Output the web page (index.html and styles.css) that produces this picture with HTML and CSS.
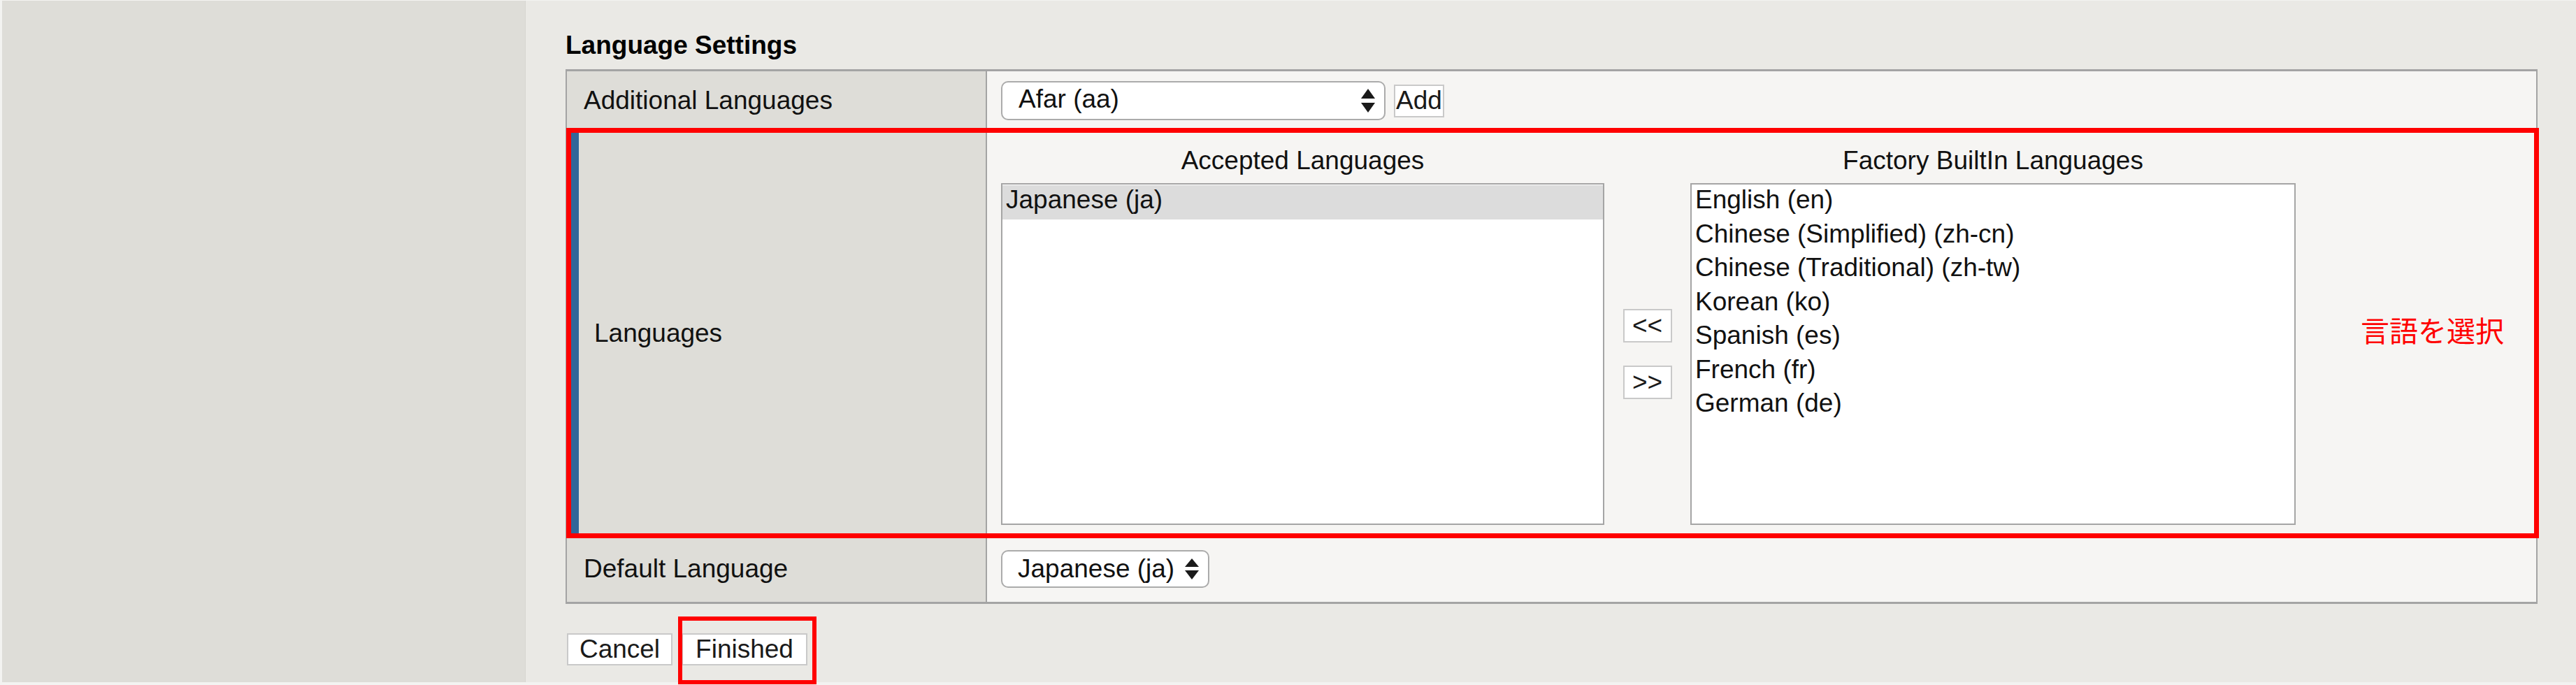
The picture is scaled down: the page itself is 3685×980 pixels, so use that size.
FILE: index.html
```html
<!DOCTYPE html>
<html lang="en">
<head>
<meta charset="utf-8">
<title>Language Settings</title>
<link rel="stylesheet" href="styles.css">
</head>
<body>
<div class="page">
  <aside class="sidebar"></aside>
  <main class="content">
    <h2 class="title">Language Settings</h2>
    <div class="settings">
      <div class="row row-add">
        <div class="label">Additional Languages</div>
        <div class="value">
          <div class="select select-wide">
            <span>Afar (aa)</span>
            <svg class="arrows" width="20" height="34" viewBox="0 0 20 34"><polygon points="10,0 20,14 0,14"/><polygon points="0,20 20,20 10,34"/></svg>
          </div>
          <button class="btn btn-add">Add</button>
        </div>
      </div>
      <div class="row row-langs">
        <div class="label label-marked">Languages</div>
        <div class="value langs">
          <div class="list-head">Accepted Languages</div>
          <div class="list-head list-head-factory">Factory BuiltIn Languages</div>
          <ul class="listbox list-accepted">
            <li class="selected">Japanese (ja)</li>
          </ul>
          <div class="movers">
            <button class="btn btn-move">&lt;&lt;</button>
            <button class="btn btn-move">&gt;&gt;</button>
          </div>
          <ul class="listbox list-factory">
            <li>English (en)</li>
            <li>Chinese (Simplified) (zh-cn)</li>
            <li>Chinese (Traditional) (zh-tw)</li>
            <li>Korean (ko)</li>
            <li>Spanish (es)</li>
            <li>French (fr)</li>
            <li>German (de)</li>
          </ul>
          <div class="note">言語を選択</div>
        </div>
      </div>
      <div class="row row-default">
        <div class="label">Default Language</div>
        <div class="value">
          <div class="select select-fit">
            <span>Japanese (ja)</span>
            <svg class="arrows" width="20" height="30" viewBox="0 0 20 30"><polygon points="10,0 20,12 0,12"/><polygon points="0,17 20,17 10,30"/></svg>
          </div>
        </div>
      </div>
    </div>
    <div class="actions">
      <button class="btn btn-cancel">Cancel</button>
      <span class="marked"><button class="btn btn-finish">Finished</button></span>
    </div>
  </main>
</div>
</body>
</html>
```
FILE: styles.css
```css
* {
  box-sizing: border-box;
}

html,
body {
  margin: 0;
  padding: 0;
}

body {
  width: 3685px;
  height: 980px;
  overflow: hidden;
  background: #f3f3f1;
  font-family: "Liberation Sans", Arial, Helvetica, sans-serif;
  color: #111;
}

.page {
  display: flex;
  height: 975px;
  margin-top: 1px;
  padding-left: 3px;
}

.sidebar {
  flex: none;
  width: 749px;
  background: #deddd8;
  border-right: 1px solid #d7d6d1;
}

.content {
  flex: 1;
  background: #eae9e5;
  padding: 43px 55px 0 57px;
}

.title {
  margin: 0 0 13px;
  font-size: 37px;
  line-height: 42px;
  font-weight: bold;
  color: #000;
}

.settings {
  border: 2px solid #a4a4a4;
  border-top-width: 3px;
  border-bottom-width: 3px;
}

.row {
  display: flex;
}

.row + .row {
  border-top: 2px solid #a4a4a4;
}

.row-add {
  height: 84px;
}

.row-default {
  height: 96px;
}

.row-langs {
  position: relative;
}

.row-langs::after {
  content: "";
  position: absolute;
  top: -5px;
  left: -1px;
  right: -4px;
  bottom: -5px;
  border: 7px solid #ff0000;
  pointer-events: none;
}

.label {
  flex: none;
  width: 601px;
  display: flex;
  align-items: center;
  padding-left: 24px;
  background: #deddd8;
  border-right: 2px solid #a4a4a4;
  font-size: 37px;
  line-height: 42px;
}

.label-marked {
  border-left: 17px solid #336699;
  padding-left: 22px;
}

.value {
  flex: 1;
  display: flex;
  align-items: center;
  padding-left: 20px;
  background: #f6f5f3;
  font-size: 37px;
  line-height: 42px;
}

.select {
  display: flex;
  align-items: center;
  background: #fff;
  border: 2px solid #ababab;
  border-radius: 10px;
  font-size: 37px;
  line-height: 42px;
  color: #111;
}

.select-wide {
  width: 550px;
  height: 56px;
  justify-content: space-between;
  padding: 0 13px 4px 23px;
}

.select-fit {
  height: 54px;
  gap: 15px;
  padding: 0 13px 0 22px;
}

.arrows {
  flex: none;
  fill: #1a1a1a;
}

.select-wide .arrows {
  margin-top: 4px;
}

.btn {
  margin: 0;
  padding: 0;
  background: #fff;
  border: 2px solid #c9c9c9;
  border-radius: 0;
  font-family: "Liberation Sans", Arial, Helvetica, sans-serif;
  font-size: 37px;
  line-height: 42px;
  color: #1a1a1a;
  text-align: center;
}

.btn-add {
  width: 72px;
  height: 47px;
  margin-left: 12px;
}

.langs {
  display: grid;
  grid-template-columns: 863px 123px 866px 1fr;
  grid-template-rows: 42px 489px;
  row-gap: 11px;
  align-items: start;
  padding-top: 21px;
  padding-bottom: 14px;
}

.list-head {
  grid-row: 1;
  grid-column: 1;
  text-align: center;
  color: #111;
}

.list-head-factory {
  grid-column: 3;
}

.listbox {
  grid-row: 2;
  grid-column: 1;
  height: 489px;
  margin: 0;
  padding: 1px 0;
  list-style: none;
  background: #fff;
  border: 2px solid #a5a5a5;
  overflow: hidden;
}

.list-factory {
  grid-column: 3;
}

.listbox li {
  padding: 0 5px 6.5px;
  line-height: 42px;
  white-space: nowrap;
}

.listbox li.selected {
  background: #dcdcdc;
}

.movers {
  grid-row: 2;
  grid-column: 2;
  align-self: center;
  justify-self: center;
  display: flex;
  flex-direction: column;
  gap: 33px;
}

.btn-move {
  width: 70px;
  height: 48px;
}

.note {
  grid-row: 1 / 3;
  grid-column: 4;
  align-self: center;
  padding-left: 93px;
  margin-bottom: 18px;
  font-family: "Noto Sans CJK JP", "Noto Sans CJK SC", sans-serif;
  font-size: 41px;
  line-height: 41px;
  color: #ff0000;
  white-space: nowrap;
}

.actions {
  display: flex;
  align-items: flex-start;
  gap: 13px;
  margin-top: 42px;
  padding-left: 2px;
}

.btn-cancel {
  width: 151px;
  height: 46px;
}

.btn-finish {
  width: 180px;
  height: 46px;
  display: block;
}

.marked {
  position: relative;
  display: block;
}

.marked::after {
  content: "";
  position: absolute;
  top: -24px;
  left: -5px;
  right: -13px;
  bottom: -27px;
  border: 6px solid #ff0000;
  pointer-events: none;
}
```
